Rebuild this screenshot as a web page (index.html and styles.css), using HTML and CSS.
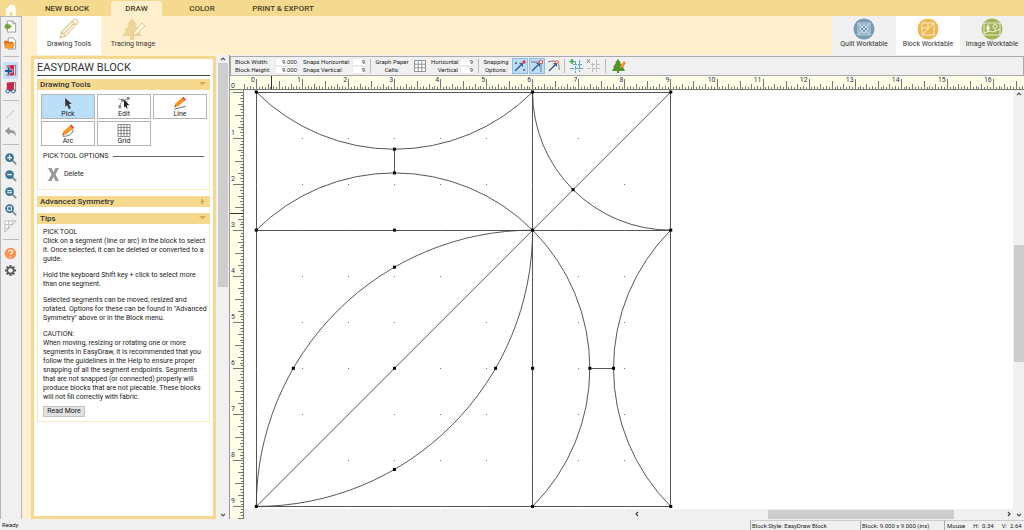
FILE: index.html
```html
<!DOCTYPE html>
<html lang="en">
<head>
<meta charset="utf-8">
<title>EasyDraw Block</title>
<link rel="stylesheet" href="styles.css">
</head>
<body>
<div class="app">
  <header class="tabs">
    <button class="home" aria-label="Home"><svg width="12" height="12" viewBox="0 0 12 12"><path d="M6 0 0 6h1.300v6H4.600V8h2.800v4h3.300V6H12L10 4V1H8.500v1.500z" fill="#fff"/></svg></button>
    <nav class="tab-list">
      <button class="tab tab-new">NEW BLOCK</button>
      <button class="tab tab-draw active">DRAW</button>
      <button class="tab tab-color">COLOR</button>
      <button class="tab tab-print">PRINT &amp; EXPORT</button>
    </nav>
  </header>

  <div class="body">
    <aside class="rail">
      <button aria-label="New project"><svg viewBox="0 0 14 14"><path d="M3.500 1h6l3 3v9h-9z" fill="#fff" stroke="#999"/><path d="M9.500 1v3h3" fill="none" stroke="#999"/><path d="m4 3 1 2 2-1-.5 2L9 7l-2.500 1L7 10 5 9l-1 2-1-2-2 1 .5-2L0 7l1.500-1L1 4l2 1z" fill="#6fa035"/></svg></button>
      <button aria-label="Open project"><svg viewBox="0 0 14 14"><path d="M4.500 1h5l3 3v9h-8z" fill="#fff" stroke="#999"/><path d="M0 4h4l1 1h5v7H1z" fill="#e07010"/><path d="M2 7h10l-2 5H1z" fill="#ff9a2e"/></svg></button>
      <hr>
      <button class="on" aria-label="Add to sketchbook"><svg viewBox="0 0 14 14"><path d="M3 1.500 11 1v11l-8 1z" fill="#c8264a"/><path d="M11 1.500h1.500V12H11" fill="#fff" stroke="#a33" stroke-width=".8"/><path d="M5 3v9M.5 7.500h9" stroke="#fff" stroke-width="3.200"/><path d="M5 3.500v8M1 7.500h8" stroke="#1f5a91" stroke-width="2.200"/></svg></button>
      <button aria-label="View sketchbook"><svg viewBox="0 0 14 14"><path d="M3 1.500 11 1v10H3z" fill="#c8264a"/><path d="M11 1.500h1.500V11H11" fill="#fff" stroke="#a33" stroke-width=".8"/><circle cx="4" cy="11" r="1.900" fill="#d9ecfb" stroke="#315a80"/><circle cx="10" cy="11" r="1.900" fill="#d9ecfb" stroke="#315a80"/><path d="M6 10.500h2" stroke="#315a80"/></svg></button>
      <hr>
      <button aria-label="Last line"><svg viewBox="0 0 14 14"><path d="m3 11 8-8" stroke="#aaa" stroke-dasharray="2 1"/><path d="m2 10 8-8" stroke="#ddd"/></svg></button>
      <button aria-label="Undo"><svg viewBox="0 0 14 14"><path d="M1 6.500 6 2v3c5 0 7 3 7 7-1.500-3-3.500-3.500-7-3.500V11z" fill="#999"/></svg></button>
      <hr>
      <button aria-label="Zoom in"><svg viewBox="0 0 14 14"><path d="m8 8 5 5" stroke="#7b9098" stroke-width="2"/><circle cx="6" cy="6" r="4.700" fill="#3a7796"/><path d="M6 3.500v5M3.500 6h5" stroke="#fff" stroke-width="1.400"/></svg></button>
      <button aria-label="Zoom out"><svg viewBox="0 0 14 14"><path d="m8 8 5 5" stroke="#7b9098" stroke-width="2"/><circle cx="6" cy="6" r="4.700" fill="#3a7796"/><path d="M3.500 6h5" stroke="#fff" stroke-width="1.400"/></svg></button>
      <button aria-label="Zoom to previous"><svg viewBox="0 0 14 14"><path d="m8 8 5 5" stroke="#7b9098" stroke-width="2"/><circle cx="6" cy="6" r="4.700" fill="#3a7796"/><path d="M3.500 5h5M3.500 7.200h5" stroke="#fff" stroke-width="1.100"/></svg></button>
      <button aria-label="Zoom to fit"><svg viewBox="0 0 14 14"><path d="m8 8 5 5" stroke="#7b9098" stroke-width="2"/><circle cx="6" cy="6" r="4.700" fill="#3a7796"/><path d="M4 4h4v4H4z" fill="none" stroke="#fff"/></svg></button>
      <button aria-label="Show grid"><svg viewBox="0 0 14 14"><path d="M1 1h12L1 13zM5 1v8M9 1v4M1 5h8M1 9h4" fill="#fff" stroke="#aaa" stroke-width=".8"/></svg></button>
      <hr>
      <button aria-label="Help"><svg viewBox="0 0 14 14"><circle cx="7" cy="7" r="6.200" fill="#ff9248"/><path d="M4.800 5.400C5 2.600 9.400 2.800 9.200 5.300 9 6.800 7 6.800 7 8.600" fill="none" stroke="#fff" stroke-width="1.400"/><circle cx="7" cy="10.700" r=".9" fill="#fff"/></svg></button>
      <button aria-label="Settings"><svg viewBox="0 0 14 14"><circle cx="7" cy="7" r="3.500" fill="none" stroke="#555" stroke-width="1.900"/><path d="M7 1v2M7 11v2M1 7h2M11 7h2M2.800 2.800l1.400 1.400M9.800 9.800l1.400 1.400M2.800 11.200l1.400-1.400M9.800 4.200l1.400-1.400" stroke="#555" stroke-width="2"/></svg></button>
    </aside>

    <div class="workspace">
      <div class="ribbon">
        <button class="ribbon-item selected"><svg width="24" height="24" viewBox="0 0 24 24"><path d="m3 21 1.500-6L17 2.500c2-1.500 5 1.500 3.500 3.500L8.500 19zM4.500 15l4 4M15 4.500 19 8.500M6.500 17 18 5.500M3.500 19l2 1.500" fill="#fff" stroke="#e3c48a" stroke-width="1.100"/></svg><span>Drawing Tools</span></button>
        <button class="ribbon-item"><svg width="24" height="24" viewBox="0 0 24 24"><path d="m11 1 5 7h-2l5 6h-2l4 5h-8v4H9v-4H1l4-5H3l5-6H6z" fill="#efd49a"/><path d="m12 19 1-4 8-9 3 3-8 8z" fill="#fff6e0" stroke="#e3c48a"/></svg><span>Tracing Image</span></button>
        <div class="worktables">
          <button class="ribbon-item gray"><svg width="24" height="24" viewBox="0 0 24 24"><circle cx="12" cy="12" r="10.500" fill="#779bb5"/><path d="M6 6h12v12H6zM8 8h8v8H8zM8 12l4-4 4 4-4 4zM6 6l12 12M18 6 6 18" fill="none" stroke="#d8e6ef" stroke-width=".8"/></svg><span>Quilt Worktable</span></button>
          <button class="ribbon-item selected"><svg width="24" height="24" viewBox="0 0 24 24"><circle cx="12" cy="12" r="10.500" fill="#ebba58"/><path d="M6 6h12v12H6zM6 18 18 6M6 11h6M12 6v6M6 6" fill="none" stroke="#fff0cd" stroke-width=".9"/></svg><span>Block Worktable</span></button>
          <button class="ribbon-item gray"><svg width="24" height="24" viewBox="0 0 24 24"><circle cx="12" cy="12" r="10.500" fill="#a2b256"/><path d="M4 6h16v12H4zM4 16l6-2 3 1 7-3" fill="none" stroke="#f0f4dc" stroke-width=".9"/><circle cx="15" cy="9.500" r="2" fill="none" stroke="#f0f4dc"/><path d="M8 7.500 9.500 11 8 15 6.500 11zM15 11.500V15" fill="#f0f4dc" stroke="#f0f4dc" stroke-width=".7"/></svg><span>Image Worktable</span></button>
        </div>
      </div>

      <div class="main">
        <section class="panel">
          <h1>EASYDRAW BLOCK</h1>
          <div class="group">
            <h2>Drawing Tools<svg width="7" height="7" viewBox="0 0 7 7"><path d="M0 1h7L3.500 4.500z" fill="#dba849"/></svg></h2>
            <div class="group-body tools-body">
              <div class="tools">
                <button class="tool on"><svg viewBox="0 0 14 14"><path d="m4 1 7 6.500H8L10 12l-2 1-2-4.500L4 10.500z" fill="#333"/></svg>Pick</button>
                <button class="tool"><svg viewBox="0 0 14 14"><path d="M2 11C3 6 6 3 12 2M1 2l10 3" fill="none" stroke="#777" stroke-width=".8"/><path d="M1 9h3v3H1zM4 2h3v3H4zM10 0h3v3h-3z" fill="#888"/><path d="m7 3 6 6h-3l1 4-3-3-1 2z" fill="#222"/></svg>Edit</button>
                <button class="tool"><svg viewBox="0 0 14 14"><path d="m1 11 1-4 7-6 3 3-7 6z" fill="#f79420"/><path d="m1 11 .5-2 1.500 1.300z" fill="#555"/><path d="m9 1 1.500-1.300 3 3L12 4z" fill="#e8403c"/><path d="m1 13 12-3" stroke="#666"/></svg>Line</button>
                <button class="tool"><svg viewBox="0 0 14 14"><path d="m1 12 1-4 7-6 3 3-7 6z" fill="#f79420"/><path d="m1 12 .5-2 1.500 1.300z" fill="#555"/><path d="m9 2 1.500-1.500 3 3L12 5z" fill="#e8403c"/><path d="M1 13c7 1 12-3 11.500-8" fill="none" stroke="#666"/></svg>Arc</button>
                <button class="tool"><svg viewBox="0 0 14 14"><path d="M.5.5h13v13H.5zM3.800.5v13M7 .5v13M10.200.5v13M.5 3.800h13M.5 7h13M.5 10.200h13" fill="#fff" stroke="#777" stroke-width=".9"/></svg>Grid</button>
              </div>
              <h3>PICK TOOL OPTIONS</h3>
              <button class="delete"><svg width="11" height="13" viewBox="0 0 11 13"><path d="M0 0h3.500l2 4 2-4H11L7.500 6.500 11 13H7.500l-2-4-2 4H0l3.500-6.500z" fill="#999"/></svg>Delete</button>
            </div>
          </div>
          <h2 class="closed">Advanced Symmetry<svg width="7" height="7" viewBox="0 0 7 7"><path d="M2 0v7l3.500-3.500z" fill="#dba849"/></svg></h2>
          <div class="group">
            <h2>Tips<svg width="7" height="7" viewBox="0 0 7 7"><path d="M0 1h7L3.500 4.500z" fill="#dba849"/></svg></h2>
            <div class="group-body tips">
              <p>PICK TOOL<br>Click on a segment (line or arc) in the block to select<br>it. Once selected, it can be deleted or converted to a<br>guide.</p>
              <p>Hold the keyboard Shift key + click to select more<br>than one segment.</p>
              <p>Selected segments can be moved, resized and<br>rotated. Options for these can be found in "Advanced<br>Symmetry" above or in the Block menu.</p>
              <p>CAUTION:<br>When moving, resizing or rotating one or more<br>segments in EasyDraw, it is recommended that you<br>follow the guidelines in the Help to ensure proper<br>snapping of all the segment endpoints. Segments<br>that are not snapped (or connected) properly will<br>produce blocks that are not piecable. These blocks<br>will not fill correctly with fabric.</p>
              <button class="more">Read More</button>
            </div>
          </div>
        </section>
        <div class="vscroll panel-scroll">
          <svg class="arrow" viewBox="0 0 8 8"><path d="m2 5 2-2 2 2" fill="none" stroke="#555" stroke-width="1.200"/></svg>
          <div class="track"><div class="thumb"></div></div>
          <svg class="arrow" viewBox="0 0 8 8"><path d="m2 3 2 2 2-2" fill="none" stroke="#555" stroke-width="1.200"/></svg>
        </div>

        <section class="editor">
          <div class="options">
            <div class="fields size">
              <label for="bw">Block Width:</label><input id="bw" value="9.000">
              <label for="bh">Block Height:</label><input id="bh" value="9.000">
            </div>
            <div class="fields snaps">
              <label for="sh">Snaps Horizontal:</label><input id="sh" value="9">
              <label for="sv">Snaps Vertical:</label><input id="sv" value="9">
            </div>
            <i class="sep"></i>
            <div class="caption">Graph Paper<br>Cells:</div>
            <svg class="cells" viewBox="0 0 12 12"><path d="M.5.5h11v11H.5zM4.200.5v11M7.800.5v11M.5 4.200h11M.5 7.800h11" fill="#fff" stroke="#888" stroke-width=".9"/></svg>
            <div class="fields graph">
              <label for="gh">Horizontal</label><input id="gh" value="9">
              <label for="gv">Vertical</label><input id="gv" value="9">
            </div>
            <i class="sep"></i>
            <div class="caption snapping">Snapping<br>Options:</div>
            <div class="snap-buttons">
              <button class="on" aria-label="Snap to grid"><svg viewBox="0 0 14 14"><path d="m2 12 6-6" stroke="#24639b" stroke-width="1.500"/><path d="M6 4h4v4z" fill="#24639b"/><path d="M2 3h2v2H2zM10 10h2v2h-2z" fill="#777"/><circle cx="11" cy="3" r="1.700" fill="#e33"/></svg></button>
              <button class="on" aria-label="Snap to node"><svg viewBox="0 0 14 14"><path d="M1 3h10v10" fill="none" stroke="#777"/><path d="m2 12 6-6" stroke="#24639b" stroke-width="1.500"/><path d="M6 4h4v4z" fill="#24639b"/><path d="M9.500 1.500h3v3h-3z" fill="#fff" stroke="#e55"/></svg></button>
              <button aria-label="Snap to drawing"><svg viewBox="0 0 14 14"><path d="M1 3c8-3 12 1 11 8" fill="none" stroke="#777"/><path d="m2 12 6-6" stroke="#24639b" stroke-width="1.500"/><path d="M6 4h4v4z" fill="#24639b"/><circle cx="10" cy="3" r="1.500" fill="#fff" stroke="#e55"/></svg></button>
            </div>
            <i class="sep"></i>
            <button class="guide" aria-label="Add guides"><svg viewBox="0 0 14 14"><path d="M6.500 2v12M10.500 1v12M4 5.500h10M1 9.500h13" stroke="#5aa9cc" stroke-dasharray="4 1"/><path d="M3 0v5M.5 2.500h5" stroke="#2eaa4a" stroke-width="1.500"/></svg></button>
            <button class="guide" aria-label="Clear guides"><svg viewBox="0 0 14 14"><path d="M6.500 4v10M10.500 1v12M5 5.500h9M1 9.500h13" stroke="#bbb" stroke-dasharray="4 1"/><path d="m1 0 3 4M4 0 1 4" stroke="#888"/></svg></button>
            <i class="sep"></i>
            <button class="guide" aria-label="Import tracing image"><svg viewBox="0 0 14 14"><path d="m6 0 3 4H8l4 4h-1l2 4H7v2H5v-2H0l2-4H1l3-4H3z" fill="#58902c"/><path d="m8 9 1-3 3-4 2 2-3 4z" fill="#ff9226"/></svg></button>
          </div>
          <div class="ruler-h"><svg id="rulerH" height="14" viewBox="0 0 1600 14"></svg></div>
          <div class="stage">
            <div class="ruler-v"><svg id="rulerV" width="13" viewBox="0 0 13 900"></svg></div>
            <div class="canvas"><svg id="block" viewBox="0 0 440 428" width="440" height="428"></svg></div>
            <div class="vscroll">
              <svg class="arrow" viewBox="0 0 8 8"><path d="m2 5 2-2 2 2" fill="none" stroke="#555" stroke-width="1.200"/></svg>
              <div class="track stage-track"><div class="thumb"></div></div>
              <svg class="arrow" viewBox="0 0 8 8"><path d="m2 3 2 2 2-2" fill="none" stroke="#555" stroke-width="1.200"/></svg>
            </div>
            <div class="hscroll">
              <svg class="arrow" viewBox="0 0 8 8"><path d="M5 2 3 4l2 2" fill="none" stroke="#444" stroke-width="1.200"/></svg>
              <div class="htrack"><div class="hthumb"></div></div>
              <svg class="arrow" viewBox="0 0 8 8"><path d="m3 2 2 2-2 2" fill="none" stroke="#444" stroke-width="1.200"/></svg>
            </div>
          </div>
        </section>
      </div>
    </div>
  </div>

  <footer class="status">
    <span class="ready">Ready</span>
    <span class="cell style">Block Style: EasyDraw Block</span>
    <span class="cell dims">Block: 9.000 x 9.000 (ins)</span>
    <span class="cell mouse"><span>Mouse</span><span>H: &nbsp;0.34</span><span>V: &nbsp;2.64</span></span>
  </footer>
</div>
<script src="draw.js"></script>
</body>
</html>
```
FILE: styles.css
```css
* { box-sizing: border-box; }
body { margin: 0; font-family: Roboto, "Liberation Sans", sans-serif; font-size: 7px; line-height: 9px; color: #222; }
button { margin: 0; padding: 0; border: 0; background: none; font: inherit; color: inherit; }
svg { display: block; flex: none; }
h1, h2, h3, p { margin: 0; font-weight: 400; }

.app { display: flex; flex-direction: column; height: 100vh; overflow: hidden; background: #f0f0f0; }
.tabs { display: flex; align-items: stretch; height: 16px; flex: none; background: #f5d98f; }
.home { width: 22px; display: flex; align-items: center; justify-content: center; padding-top: 3px; }
.tab-list { display: flex; flex: 1; padding: 1px 0 0 12px; }
.tab { font-size: 8px; font-weight: 500; color: #4a3f22; border-radius: 3px 3px 0 0; }
.tab-new { width: 66px; margin-right: 11px; }
.tab-draw { width: 51px; }
.tab-color { width: 80px; }
.tab-print { width: 82px; }
.tab.active { background: #ffefcc; }

.body { display: flex; flex: 1; min-height: 0; }
.rail { display: flex; flex-direction: column; align-items: center; width: 22px; flex: none; padding: 1px 1px 0 0; background: #f0f0f0; border: 1px solid #b5b5b5; border-width: 1px 1px 0 1px; }
.rail button { width: 15px; height: 17px; display: flex; align-items: center; justify-content: center; flex: none; }
.rail button svg { width: 13px; height: 13px; }
.rail .on { background: #c4e0f8; }
.rail hr { width: 16px; margin: 4px 0 5px; border: 0; border-top: 1px solid #bbb; flex: none; }

.workspace { display: flex; flex-direction: column; flex: 1; min-width: 0; background: #fdf0d2; }
.ribbon { display: flex; height: 39px; flex: none; padding-left: 15px; background: #ffefcc; }
.ribbon-item { display: flex; flex-direction: column; align-items: center; justify-content: flex-start; width: 64px; padding-top: 1px; font-size: 7px; color: #333; }
.ribbon-item svg { width: 24px; height: 24px; margin-bottom: -1px; }
.ribbon-item.selected { background: #fff; }
.ribbon-item.gray { background: #f0f0f0; }
.worktables { display: flex; margin-left: auto; }

.main { display: flex; flex: 1; min-height: 0; padding-left: 9px; }
.panel { width: 185px; flex: none; background: #fff; border: 3px solid #f5d98f; margin-top: 1px; padding: 3px; overflow: hidden; }
.panel h1 { font-size: 11px; line-height: 12px; border-bottom: 1px solid #444; padding-bottom: 1px; margin-bottom: 3px; color: #333; }
.panel h2 { display: flex; align-items: center; justify-content: space-between; height: 11px; padding: 0 4px 0 3px; background: #f5d98f; font-size: 8px; font-weight: 500; color: #333; }
.group-body { border: 1px solid #fdeac2; border-top: 0; padding: 4px 5px; }
.tools-body { height: 100px; margin-bottom: 6px; }
.closed { margin-bottom: 6px; }
.tools { display: grid; grid-template-columns: repeat(3, 54px); gap: 2px; margin-left: -2px; }
.tool { display: flex; flex-direction: column; align-items: center; height: 25px; padding-top: 2px; border: 1px solid #b3b3b3; font-size: 7px; line-height: 8px; }
.tool svg { width: 14px; height: 13px; }
.tool.on { background: #bbdef9; }
.panel h3 { display: flex; align-items: center; gap: 5px; margin-top: 6px; font-size: 7px; line-height: 9px; }
.panel h3::after { content: ""; flex: 1; border-top: 1px solid #666; }
.delete { display: flex; align-items: center; gap: 5px; margin: 7px 0 0 5px; }
.tips p { margin-bottom: 7px; white-space: nowrap; }
.more { display: block; width: 42px; height: 11px; margin-top: -3px; border: 1px solid #c3c3c3; background: #e1e1e1; }

.vscroll { display: flex; flex-direction: column; align-items: center; width: 10px; background: #f0f0f0; }
.arrow { width: 8px; height: 8px; }
.track { flex: 1; width: 10px; }
.thumb { background: #cdcdcd; height: 50%; }
.panel-scroll { width: 13px; flex: none; }

.editor { display: flex; flex-direction: column; flex: 1; min-width: 0; background: #f0f0f0; border-left: 1px solid #999; }
.options { display: flex; align-items: center; height: 20px; flex: none; margin-top: 1px; border: 1px solid #a9a9a9; padding: 0 0 1px 4px; line-height: 8px; font-size: 6px; }
.fields { display: grid; row-gap: 0; align-items: center; }
.fields input { height: 8px; width: 100%; border: 0; padding: 0 1px; background: #fff; font: inherit; color: inherit; text-align: right; box-shadow: inset 0 0 0 1px #eaeaea; }
.size { grid-template-columns: 40px 23px; margin-right: 5px; }
.snaps { grid-template-columns: 49px 14px; }
.graph { grid-template-columns: 29px 14px; }
.graph label { text-align: right; padding-right: 2px; }
.caption { text-align: center; width: 34px; }
.snapping { width: 26px; margin-right: 3px; }
.sep { width: 1px; height: 14px; margin: 0 4px; background: #bbb; }
.cells { width: 12px; height: 12px; margin: 0 5px; }
.snap-buttons { display: flex; gap: 1px; }
.snap-buttons button { width: 16px; height: 16px; display: flex; align-items: center; justify-content: center; }
.snap-buttons .on { background: #bcdcf7; border: 1px solid #8dbde6; }
.snap-buttons svg, .guide svg { width: 14px; height: 14px; }
.snap-buttons + .sep { margin: 0 2px; }
.guide { width: 17px; display: flex; justify-content: center; }

.ruler-h { height: 14px; flex: none; overflow: hidden; background: #ffffe8; border-bottom: 1px solid #777; }
.stage { display: grid; grid-template: 1fr 10px / 14px 1fr 11px; flex: 1; min-height: 0; }
.ruler-v { overflow: hidden; grid-row: 1 / 3; background: #ffffe8; border-right: 1px solid #777; }
.canvas { background: #fff; overflow: hidden; min-width: 0; }
.stage-track { padding-top: 147px; }
.stage-track .thumb { height: 117px; }
.stage .vscroll { grid-row: 1 / 3; grid-column: 3; width: 11px; }
.hscroll { grid-row: 2; grid-column: 2; display: flex; align-items: center; margin-left: 389px; background: #f0f0f0; }
.htrack { flex: 1; height: 9px; display: flex; }
.hthumb { width: 51%; margin-left: 35%; background: #cdcdcd; }
.ruler-label { font-size: 7px; fill: #335; }

.status { display: flex; align-items: center; height: 11px; flex: none; background: #f0f0f0; font-size: 6px; line-height: 9px; }
.ready { flex: 1; padding-left: 2px; }
.cell { height: 10px; border-left: 1px solid #aaa; border-top: 1px solid #ccc; padding-left: 1px; }
.style { width: 110px; }
.dims { width: 84px; }
.mouse { display: flex; gap: 8px; width: 80px; padding-left: 2px; }
```
FILE: draw.js
```js
const NS = "http://www.w3.org/2000/svg";
const UNIT = 46.05;

function add(parent, name, attrs, text) {
  const el = document.createElementNS(NS, name);
  for (const key in attrs) el.setAttribute(key, attrs[key]);
  if (text !== undefined) el.textContent = text;
  parent.appendChild(el);
}

// Rulers, divided into sixteenths of an inch
const rulerH = document.getElementById("rulerH");
const rulerV = document.getElementById("rulerV");
rulerH.setAttribute("width", 1600);
rulerV.setAttribute("height", 900);

function tickLength(i) {
  if (i % 16 === 0) return 10;
  if (i % 8 === 0) return 8;
  if (i % 4 === 0) return 5;
  return i % 2 === 0 ? 3 : 2;
}
function ticks(origin, first, last, vertical) {
  let d = "";
  for (let i = first; i < last; i++) {
    const p = Math.round(origin + i * UNIT / 16) + 0.5;
    d += vertical ? `M13 ${p}h${-tickLength(i)}` : `M${p} 13v${-tickLength(i)}`;
  }
  return d;
}
add(rulerH, "path", { d: ticks(26, -4, 500, false), stroke: "#555", "stroke-width": 0.8 });
add(rulerV, "path", { d: ticks(2, 0, 300, true), stroke: "#555", "stroke-width": 0.8 });

// Number only the inches whose labels fit in the visible ruler
const inchesAcross = Math.floor((rulerH.parentNode.clientWidth - 26) / UNIT);
const inchesDown = Math.floor((rulerV.parentNode.clientHeight - 2) / UNIT);
for (let n = 0; n <= inchesAcross; n++) {
  add(rulerH, "text", { x: 25 + n * UNIT, y: 6, "text-anchor": "end", class: "ruler-label" }, n);
}
for (let n = 1; n <= inchesDown; n++) {
  add(rulerV, "text", { x: 1, y: n * UNIT - 1, class: "ruler-label" }, n);
}
add(rulerH, "text", { x: 1, y: 12, class: "ruler-label" }, 0);
add(rulerH, "path", { d: "M41.500 0v14", stroke: "#333" });
add(rulerV, "path", { d: "M0 123.500h13", stroke: "#333" });

// Block drawing
const block = document.getElementById("block");
const X = v => (12.3 + v * UNIT).toFixed(2);
const Y = v => (2 + v * UNIT).toFixed(2);
const line = (a, b, c, e) => `M${X(a)} ${Y(b)}L${X(c)} ${Y(e)}`;
const arc = (a, b, c, e, r, sweep) =>
  `M${X(a)} ${Y(b)}A${r * UNIT} ${r * UNIT} 0 0 ${sweep} ${X(c)} ${Y(e)}`;
const R = 3 * Math.SQRT2;
const S = R - 3;

const straight = [
  line(0, 0, 9, 0), line(9, 0, 9, 9), line(9, 9, 0, 9), line(0, 9, 0, 0),
  line(6, 0, 6, 9), line(0, 3, 9, 3),
  line(3, S, 3, 3 - S), line(6 + S, 6, 9 - S, 6)
].join("");
const curves = [
  line(9, 0, 0, 9),
  arc(0, 0, 6, 0, R, 0), arc(0, 3, 6, 3, R, 1),
  arc(0, 9, 6, 3, 6, 1), arc(0, 9, 6, 3, 6, 0),
  arc(6, 0, 9, 3, 3, 0),
  arc(6, 3, 6, 9, R, 1), arc(9, 3, 9, 9, R, 0)
].join("");
add(block, "path", { d: straight, fill: "none", stroke: "#555", "shape-rendering": "crispEdges" });
add(block, "path", { d: curves, fill: "none", stroke: "#444", "stroke-width": 0.9 });

for (let i = 0; i <= 9; i++) {
  for (let j = 0; j <= 9; j++) {
    add(block, "rect", { x: Math.floor(X(i)), y: Math.floor(Y(j)), width: 1, height: 1, fill: "#3a9a50" });
  }
}

const h = 6 * Math.cos(Math.PI / 6);
const q = 3 / Math.SQRT2;
const nodes = [
  [0, 0], [6, 0], [9, 0], [0, 3], [3, 3], [6, 3], [9, 3], [0, 9], [6, 9], [9, 9],
  [3, S], [3, 3 - S], [3, 6], [6, 6], [6 + S, 6], [9 - S, 6],
  [6 - h, 6], [3, 9 - h], [h, 6], [3, 3 + h], [9 - q, q]
];
for (const [a, b] of nodes) {
  add(block, "rect", { x: X(a) - 1.5, y: Y(b) - 1.5, width: 3, height: 3, fill: "#000" });
}
```
